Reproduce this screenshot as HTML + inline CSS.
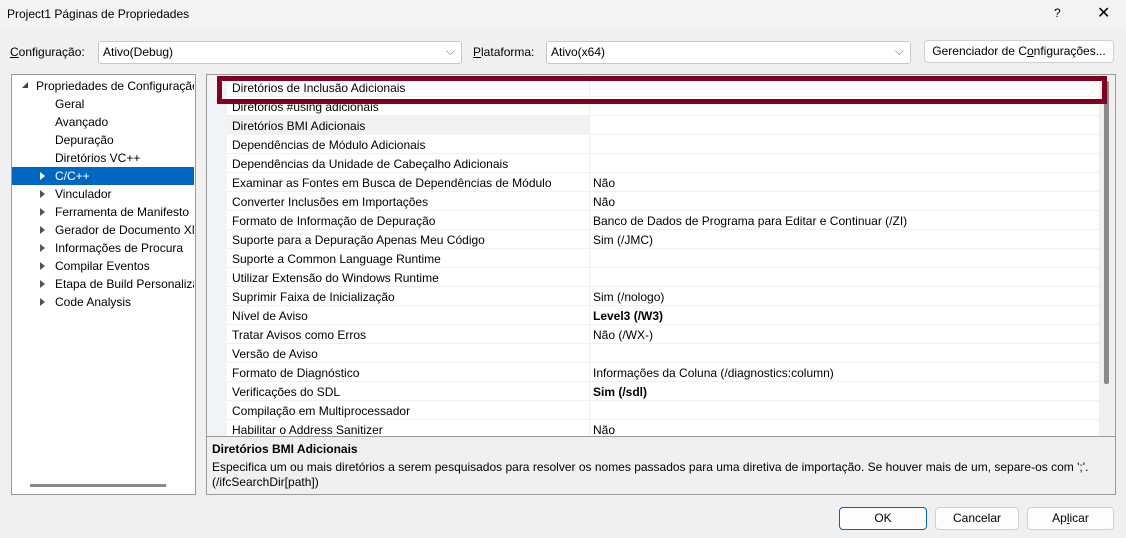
<!DOCTYPE html>
<html><head><meta charset="utf-8"><style>
*{margin:0;padding:0;box-sizing:border-box}
body{width:1126px;height:538px;background:#f0f0f0;font-family:"Segoe UI","Liberation Sans",sans-serif;font-size:12px;color:#000;position:relative;overflow:hidden}
.a{position:absolute;white-space:nowrap}
.combo{position:absolute;background:#fff;border:1px solid #c8c8c8;border-radius:3px;height:23px;padding:3px 4px}
.btn{position:absolute;background:#fdfdfd;border:1px solid #d0d0d0;border-radius:4px;height:23px;text-align:center;line-height:21px}
.row{position:absolute;left:227px;width:872px;height:19px;border-bottom:1px solid #f0f0f0}
.row span{position:absolute;top:3px;white-space:nowrap}
.row .l{left:5px}.row .r{left:366px}
.tr{position:absolute;left:12px;width:182px;height:18px;overflow:hidden}
.tr span{position:absolute;top:2px;white-space:nowrap}
.arr{position:absolute;left:28px;top:5px;width:0;height:0;border-left:5px solid #555;border-top:4px solid transparent;border-bottom:4px solid transparent}
</style></head><body>
<div class="a" style="left:0;top:0;width:1126px;height:30px;background:#f3f3f3"></div>
<div class="a" style="left:7px;top:7px">Project1 Páginas de Propriedades</div>
<div class="a" style="left:1054px;top:6px">?</div>
<div class="a" style="left:1097px;top:3px;font-size:16px">✕</div>

<div class="a" style="left:10px;top:45px"><u>C</u>onfiguração:</div>
<div class="combo" style="left:98px;top:41px;width:364px">Ativo(Debug)<span class="a" style="right:6px;top:2px;color:#777">⌵</span></div>
<div class="a" style="left:473px;top:45px"><u>P</u>lataforma:</div>
<div class="combo" style="left:546px;top:41px;width:365px">Ativo(x64)<span class="a" style="right:6px;top:2px;color:#777">⌵</span></div>
<div class="btn" style="left:924px;top:40px;width:190px">Gerenciador de C<u>o</u>nfigurações...</div>

<div class="a" style="left:11px;top:74px;width:185px;height:421px;background:#fff;border:1px solid #9a9a9a"></div>
<div class="a" style="left:22px;top:82px;width:0;height:0;border-right:6px solid #444;border-top:6px solid transparent"></div>
<div class="a" style="left:36px;top:79px;width:158px;overflow:hidden">Propriedades de Configuração</div>
<div class="a" style="left:55px;top:97px">Geral</div>
<div class="a" style="left:55px;top:115px">Avançado</div>
<div class="a" style="left:55px;top:133px">Depuração</div>
<div class="a" style="left:55px;top:151px">Diretórios VC++</div>
<div class="tr" style="top:167px;background:#0067c0;color:#fff"><div class="arr" style="border-left-color:#fff"></div><span style="left:43px">C/C++</span></div>
<div class="tr" style="top:185px"><div class="arr"></div><span style="left:43px">Vinculador</span></div>
<div class="tr" style="top:203px"><div class="arr"></div><span style="left:43px">Ferramenta de Manifesto</span></div>
<div class="tr" style="top:221px"><div class="arr"></div><span style="left:43px">Gerador de Documento XML</span></div>
<div class="tr" style="top:239px"><div class="arr"></div><span style="left:43px">Informações de Procura</span></div>
<div class="tr" style="top:257px"><div class="arr"></div><span style="left:43px">Compilar Eventos</span></div>
<div class="tr" style="top:275px"><div class="arr"></div><span style="left:43px">Etapa de Build Personalizada</span></div>
<div class="tr" style="top:293px"><div class="arr"></div><span style="left:43px">Code Analysis</span></div>
<div class="a" style="left:30px;top:484px;width:136px;height:3px;background:#888"></div>

<div class="a" style="left:206px;top:74px;width:910px;height:363px;background:#fff;border:1px solid #9a9a9a;overflow:hidden">
<div class="a" style="left:0;top:0;width:20px;height:363px;background:#f0f3f8"></div>
<div class="a" style="left:382px;top:0;width:1px;height:363px;background:#eee"></div>
<div class="a" style="left:892px;top:0;width:17px;height:363px;background:#f0f0f0"></div>
<div class="a" style="left:897px;top:6px;width:5px;height:303px;background:#8a8a8a;border-radius:2px"></div>
</div>
<div style="position:absolute;left:0;top:0">
<div class="row" style="top:78px"><span class="l">Diretórios de Inclusão Adicionais</span></div>
<div class="row" style="top:97px"><span class="l">Diretórios #using adicionais</span></div>
<div class="row" style="top:116px"><span class="l" style="left:0;top:0;width:362px;height:19px;background:#f2f2f2"></span><span class="l">Diretórios BMI Adicionais</span></div>
<div class="row" style="top:135px"><span class="l">Dependências de Módulo Adicionais</span></div>
<div class="row" style="top:154px"><span class="l">Dependências da Unidade de Cabeçalho Adicionais</span></div>
<div class="row" style="top:173px"><span class="l">Examinar as Fontes em Busca de Dependências de Módulo</span><span class="r">Não</span></div>
<div class="row" style="top:192px"><span class="l">Converter Inclusões em Importações</span><span class="r">Não</span></div>
<div class="row" style="top:211px"><span class="l">Formato de Informação de Depuração</span><span class="r">Banco de Dados de Programa para Editar e Continuar (/ZI)</span></div>
<div class="row" style="top:230px"><span class="l">Suporte para a Depuração Apenas Meu Código</span><span class="r">Sim (/JMC)</span></div>
<div class="row" style="top:249px"><span class="l">Suporte a Common Language Runtime</span></div>
<div class="row" style="top:268px"><span class="l">Utilizar Extensão do Windows Runtime</span></div>
<div class="row" style="top:287px"><span class="l">Suprimir Faixa de Inicialização</span><span class="r">Sim (/nologo)</span></div>
<div class="row" style="top:306px"><span class="l">Nível de Aviso</span><span class="r" style="font-weight:bold">Level3 (/W3)</span></div>
<div class="row" style="top:325px"><span class="l">Tratar Avisos como Erros</span><span class="r">Não (/WX-)</span></div>
<div class="row" style="top:344px"><span class="l">Versão de Aviso</span></div>
<div class="row" style="top:363px"><span class="l">Formato de Diagnóstico</span><span class="r">Informações da Coluna (/diagnostics:column)</span></div>
<div class="row" style="top:382px"><span class="l">Verificações do SDL</span><span class="r" style="font-weight:bold">Sim (/sdl)</span></div>
<div class="row" style="top:401px"><span class="l">Compilação em Multiprocessador</span></div>
<div class="row" style="top:420px;height:16px;overflow:hidden;border:0"><span class="l">Habilitar o Address Sanitizer</span><span class="r">Não</span></div>
</div>
<div class="a" style="left:206px;top:436px;width:910px;height:2px;background:#9a9a9a"></div>
<div class="a" style="left:217px;top:76px;width:890px;height:28px;border:5px solid #800020;border-left:none"></div>
<div class="a" style="left:217px;top:76px;width:5px;height:28px;background:#800020"></div>

<div class="a" style="left:206px;top:437px;width:910px;height:58px;border:1px solid #9a9a9a;border-top:none;background:#f0f0f0"></div>
<div class="a" style="left:212px;top:442px;font-weight:bold">Diretórios BMI Adicionais</div>
<div class="a" style="left:212px;top:460px">Especifica um ou mais diretórios a serem pesquisados para resolver os nomes passados para uma diretiva de importação. Se houver mais de um, separe-os com ';'.</div>
<div class="a" style="left:212px;top:475px">(/ifcSearchDir[path])</div>

<div class="btn" style="left:839px;top:507px;width:88px;border:1px solid #0067c0">OK</div>
<div class="btn" style="left:935px;top:507px;width:84px">Cancelar</div>
<div class="btn" style="left:1027px;top:507px;width:87px">Ap<u>l</u>icar</div>
</body></html>
